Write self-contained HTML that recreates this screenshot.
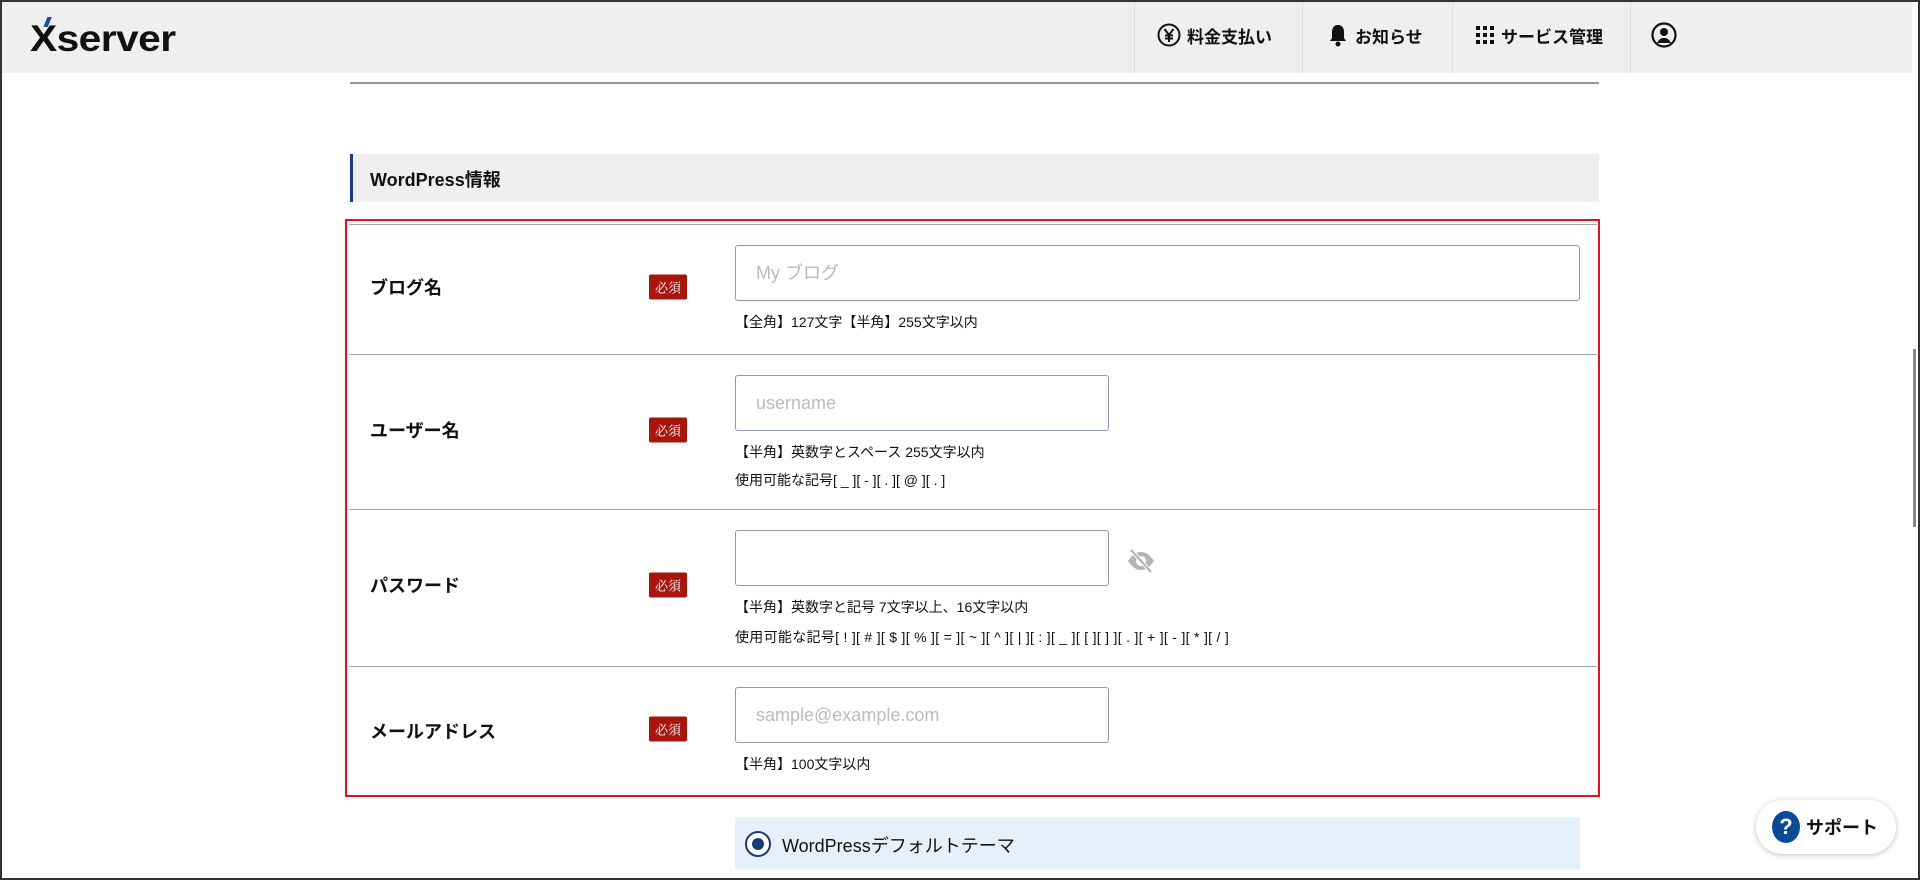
<!DOCTYPE html>
<html><head><meta charset="utf-8"><style>
*{margin:0;padding:0;box-sizing:border-box}
body{width:1920px;height:880px;overflow:hidden;background:#fff;font-family:"Liberation Sans","Noto Sans CJK JP",sans-serif;color:#111;position:relative}
.frame{position:absolute;inset:0;border:2px solid #333;pointer-events:none;z-index:10}
.hdr{position:absolute;left:0;top:0;width:1912px;height:73px;background:#efefef}
.logo{position:absolute;left:30px;top:20px;font-size:37px;font-weight:bold;letter-spacing:-0.5px;color:#111;line-height:37px;transform:scaleX(1.1);transform-origin:left}
.logo i{position:absolute;left:14px;top:-3px;width:4px;height:10px;background:#1a4fa0;transform:skewX(-20deg)}
.nav{position:absolute;top:0;height:73px;border-left:1px solid #ddd;display:flex;align-items:center;font-size:17px;font-weight:bold;padding-bottom:3px}
.nav svg{margin-right:6px}
.a{position:absolute}
.lbl{position:absolute;left:370px;font-size:18px;font-weight:bold;transform:translateY(-50%)}
.req{position:absolute;left:649px;width:38px;height:25px;background:#a8150c;color:#fff;font-size:13px;line-height:25px;text-align:center;border-radius:2px;transform:translateY(-50%);font-family:"Noto Serif CJK SC",serif}
.inp{position:absolute;left:735px;height:56px;border:1px solid #8c9bb0;border-radius:3px;background:#fff;font-size:18px;color:#bbb;padding-left:20px;line-height:54px}
.help{position:absolute;left:735px;font-size:14px;color:#111}
.sep{position:absolute;left:349px;width:1248px;height:1px;background:#9aa6b8}
</style></head><body>
<div class="frame"></div>
<div class="hdr">
 <div class="logo"><i></i>Xserver</div>
 <div class="nav" style="left:1134px;width:168px;padding-left:22px">
  <svg width="24" height="24" viewBox="0 0 24 24"><circle cx="12" cy="12" r="10.5" fill="none" stroke="#111" stroke-width="2"/><path d="M7.5 6l4.5 6 4.5-6M12 12v7M8 12.5h8M8 15.5h8" fill="none" stroke="#111" stroke-width="2"/></svg>料金支払い</div>
 <div class="nav" style="left:1302px;width:150px;padding-left:24px">
  <svg width="22" height="24" viewBox="0 0 22 24"><path d="M11 2c-4 0-6 3-6 7v6l-2 3h16l-2-3V9c0-4-2-7-6-7z" fill="#111"/><circle cx="11" cy="21" r="2.5" fill="#111"/></svg>お知らせ</div>
 <div class="nav" style="left:1452px;width:178px;padding-left:22px">
  <svg width="20" height="20" viewBox="0 0 20 20" fill="#111"><rect x="1" y="1" width="4" height="4"/><rect x="8" y="1" width="4" height="4"/><rect x="15" y="1" width="4" height="4"/><rect x="1" y="8" width="4" height="4"/><rect x="8" y="8" width="4" height="4"/><rect x="15" y="8" width="4" height="4"/><rect x="1" y="15" width="4" height="4"/><rect x="8" y="15" width="4" height="4"/><rect x="15" y="15" width="4" height="4"/></svg>サービス管理</div>
 <div class="nav" style="left:1630px;width:282px;padding-left:20px">
  <svg width="26" height="26" viewBox="0 0 26 26"><circle cx="13" cy="13" r="11.5" fill="none" stroke="#111" stroke-width="2.2"/><circle cx="13" cy="10" r="4" fill="#111"/><path d="M6 21c2-4 4-5 7-5s5 1 7 5" fill="#111"/></svg></div>
</div>
<div class="a" style="left:350px;top:82px;width:1249px;height:2px;background:#8a9aa8"></div>
<div class="a" style="left:350px;top:154px;width:1249px;height:48px;background:#efefef;border-left:3px solid #1a3a8a"></div>
<div class="a" style="left:370px;top:166px;font-size:18px;font-weight:bold">WordPress情報</div>
<div class="a" style="left:345px;top:219px;width:1255px;height:578px;border:2px solid #e0141a"></div>
<div class="sep" style="top:224px"></div>
<div class="sep" style="top:354px"></div>
<div class="sep" style="top:509px"></div>
<div class="sep" style="top:666px"></div>

<div class="lbl" style="top:287px">ブログ名</div><div class="req" style="top:287px">必須</div>
<div class="inp" style="top:245px;width:845px">My ブログ</div>
<div class="help" style="top:312px">【全角】127文字【半角】255文字以内</div>

<div class="lbl" style="top:430px">ユーザー名</div><div class="req" style="top:430px">必須</div>
<div class="inp" style="top:375px;width:374px">username</div>
<div class="help" style="top:442px">【半角】英数字とスペース 255文字以内</div>
<div class="help" style="top:470px">使用可能な記号[ _ ][ - ][ . ][ @ ][ . ]</div>

<div class="lbl" style="top:585px">パスワード</div><div class="req" style="top:585px">必須</div>
<div class="inp" style="top:530px;width:374px"></div>
<svg class="a" style="left:1126px;top:547px" width="30" height="28" viewBox="0 0 30 28"><path d="M2 14c4-6 8-9 13-9s9 3 13 9c-4 6-8 9-13 9S6 20 2 14z" fill="#b5b5b5"/><circle cx="15" cy="14" r="5" fill="#fff"/><path d="M5 3l20 22" stroke="#fff" stroke-width="4"/><path d="M5 3l20 22" stroke="#b5b5b5" stroke-width="2.2"/></svg>
<div class="help" style="top:597px">【半角】英数字と記号 7文字以上、16文字以内</div>
<div class="help" style="top:627px;letter-spacing:0.3px">使用可能な記号[ ! ][ # ][ $ ][ % ][ = ][ ~ ][ ^ ][ | ][ : ][ _ ][ [ ][ ] ][ . ][ + ][ - ][ * ][ / ]</div>

<div class="lbl" style="top:731px">メールアドレス</div><div class="req" style="top:729px">必須</div>
<div class="inp" style="top:687px;width:374px">sample@example.com</div>
<div class="help" style="top:754px">【半角】100文字以内</div>

<div class="a" style="left:735px;top:817px;width:845px;height:52px;background:#e6f0fa"></div>
<div class="a" style="left:745px;top:831px;width:26px;height:26px;border-radius:50%;border:2px solid #1a3a7a;background:#fff"><div style="position:absolute;left:5px;top:5px;width:12px;height:12px;border-radius:50%;background:#1a3a7a"></div></div>
<div class="a" style="left:782px;top:832px;font-size:18px">WordPressデフォルトテーマ</div>

<div class="a" style="left:1756px;top:800px;width:140px;height:54px;border-radius:27px;background:#fff;box-shadow:0 1px 6px rgba(0,0,0,.25)"></div>
<div class="a" style="left:1772px;top:811px;width:28px;height:32px;border-radius:50%;background:#0a4a96;color:#fff;font-weight:bold;font-size:22px;text-align:center;line-height:32px">?</div>
<div class="a" style="left:1806px;top:814px;font-size:18px;font-weight:bold">サポート</div>

<div class="a" style="left:1913px;top:349px;width:3px;height:178px;background:#888"></div>
</body></html>
